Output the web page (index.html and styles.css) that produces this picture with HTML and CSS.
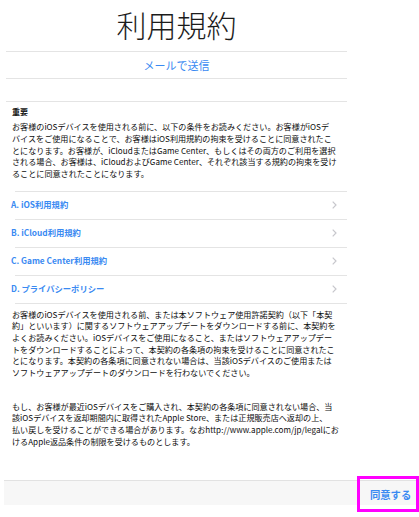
FILE: index.html
```html
<!DOCTYPE html>
<html lang="ja">
<head>
  <meta charset="UTF-8">
  <title>利用規約</title>
  <link rel="stylesheet" href="styles.css">
</head>
<body>
  <div class="page">
    <main class="sheet">
      <h1 class="title">利用規約</h1>
      <div class="mail-row"><a class="mail-link" href="#">メールで送信</a></div>
      <div class="spacer"></div>

      <section class="terms">
        <h2 class="terms-head">重要</h2>
        <p class="terms-text intro">お客様のiOSデバイスを使用される前に、以下の条件をお読みください。お客様がiOSデ<br>バイスをご使用になることで、お客様はiOS利用規約の拘束を受けることに同意されたこ<br>とになります。お客様が、iCloudまたはGame Center、もしくはその両方のご利用を選択<br>される場合、お客様は、iCloudおよびGame Center、それぞれ該当する規約の拘束を受け<br>ることに同意されたことになります。</p>

        <ul class="term-list">
          <li class="term-item"><span>A. iOS利用規約</span><svg class="chev" width="5" height="8" viewBox="0 0 5 8"><path d="M0.7 0.6 L4 4 L0.7 7.4" fill="none" stroke="#c7c7cc" stroke-width="1.2"/></svg></li>
          <li class="term-item"><span>B. iCloud利用規約</span><svg class="chev" width="5" height="8" viewBox="0 0 5 8"><path d="M0.7 0.6 L4 4 L0.7 7.4" fill="none" stroke="#c7c7cc" stroke-width="1.2"/></svg></li>
          <li class="term-item"><span>C. Game Center利用規約</span><svg class="chev" width="5" height="8" viewBox="0 0 5 8"><path d="M0.7 0.6 L4 4 L0.7 7.4" fill="none" stroke="#c7c7cc" stroke-width="1.2"/></svg></li>
          <li class="term-item"><span>D. プライバシーポリシー</span><svg class="chev" width="5" height="8" viewBox="0 0 5 8"><path d="M0.7 0.6 L4 4 L0.7 7.4" fill="none" stroke="#c7c7cc" stroke-width="1.2"/></svg></li>
        </ul>

        <p class="terms-text">お客様のiOSデバイスを使用される前、または本ソフトウェア使用許諾契約（以下「本契<br>約」といいます）に関するソフトウェアアップデートをダウンロードする前に、本契約を<br>よくお読みください。iOSデバイスをご使用になること、またはソフトウェアアップデー<br>トをダウンロードすることによって、本契約の各条項の拘束を受けることに同意されたこ<br>とになります。本契約の各条項に同意されない場合は、当該iOSデバイスのご使用または<br>ソフトウェアアップデートのダウンロードを行わないでください。</p>

        <p class="terms-text second">もし、お客様が最近iOSデバイスをご購入され、本契約の各条項に同意されない場合、当<br>該iOSデバイスを返却期間内に取得されたApple Store、または正規販売店へ返却の上、<br>払い戻しを受けることができる場合があります。なおhttp://www.apple.com/jp/legalにお<br>けるApple返品条件の制限を受けるものとします。</p>
      </section>
    </main>

    <footer class="toolbar">
      <button class="agree">同意する</button>
    </footer>
  </div>
</body>
</html>
```

FILE: styles.css
```css
* {
  box-sizing: border-box;
  margin: 0;
  padding: 0;
}

body {
  font-family: "Noto Sans CJK JP", "Liberation Sans", sans-serif;
  background: #ffffff;
  color: #111111;
}

.page {
  display: flex;
  flex-direction: column;
  height: 517px;
  overflow: hidden;
}

.sheet {
  flex: 1;
  width: 341px;
  margin-left: 6px;
}

.title {
  height: 52px;
  padding-bottom: 1px;
  border-bottom: 1px solid #e4e4e4;
  font-size: 30px;
  font-weight: 300;
  line-height: 48px;
  text-align: center;
  color: #1c1c1c;
}

.mail-row {
  height: 27px;
  border-bottom: 1px solid #e4e4e4;
  display: flex;
  align-items: center;
  justify-content: center;
}

.mail-link {
  font-size: 11px;
  color: #3a8af2;
  text-decoration: none;
}

.spacer {
  height: 23px;
  border-bottom: 1px solid #e4e4e4;
}

.terms {
  padding: 4px 4px 0 6px;
  font-size: 8.1px;
  line-height: 11.7px;
}

.terms-head {
  font-size: 8px;
  font-weight: bold;
  line-height: 11.7px;
  margin-bottom: 3.6px;
}

.terms-text {
  color: #0d0d0d;
  white-space: nowrap;
}

.intro {
  margin-bottom: 10.8px;
}

.second {
  margin-top: 21.8px;
}

.term-list {
  list-style: none;
  margin: 0 -4px 5px -1px;
  background: linear-gradient(#e4e4e4, #e4e4e4) no-repeat right top / calc(100% - 4px) 1px;
  padding-top: 1px;
}

.term-item {
  height: 28px;
  padding: 0 10px 1px 0;
  display: flex;
  align-items: center;
  justify-content: space-between;
  font-size: 8.3px;
  font-weight: bold;
  color: #3a8af2;
  background: linear-gradient(#e4e4e4, #e4e4e4) no-repeat right bottom / calc(100% - 4px) 1px;
}

.chev {
  display: block;
}

.toolbar {
  height: 25px;
  margin: 0 0 12px 4px;
  background: #f7f7f7;
  border-top: 1px solid #e2e2e2;
  display: flex;
  justify-content: flex-end;
  align-items: center;
}

.agree {
  height: 36px;
  width: 62px;
  margin-top: 2px;
  padding: 0 0 0 10px;
  border: 3px solid #ff00ff;
  background: transparent;
  font-family: "Noto Sans CJK JP", sans-serif;
  font-size: 10.3px;
  font-weight: bold;
  color: #3a8af2;
  text-align: left;
  white-space: nowrap;
}
```
